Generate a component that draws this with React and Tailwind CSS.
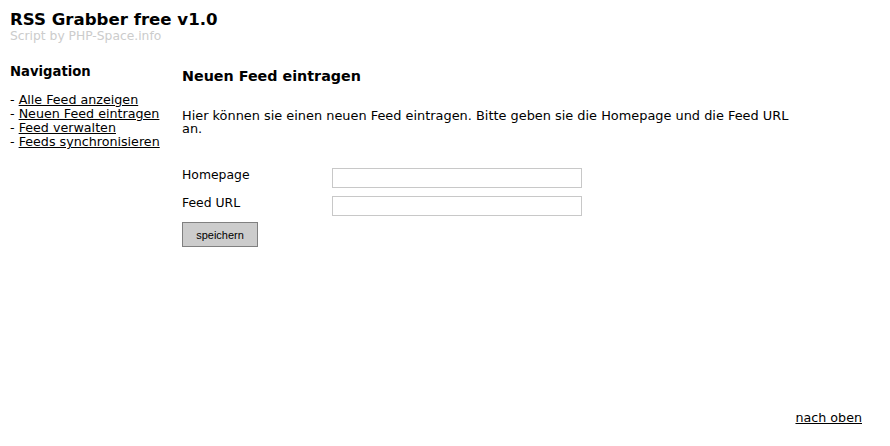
import React from 'react';

const navLinks = ['Alle Feed anzeigen', 'Neuen Feed eintragen', 'Feed verwalten', 'Feeds synchronisieren'];

const App = () => {
  return (
    <div className="min-h-screen flex flex-col bg-white text-black text-[12.7px] leading-[14px]" style={{ fontFamily: '"DejaVu Sans", Verdana, sans-serif' }}>
      {/* Header */}
      <div className="pl-[10px] pt-[10px]">
        <h1 className="text-[16.6px] leading-[19px] font-bold">RSS Grabber free v1.0</h1>
        <div className="text-[#cccccc] text-[12.3px] leading-[14px]">Script by PHP-Space.info</div>
      </div>

      <div className="flex mt-[20px]">
        {/* Navigation */}
        <div className="w-[182px] pl-[10px] shrink-0">
          <h2 className="text-[13.2px] leading-[17px] font-bold">Navigation</h2>
          <ul className="mt-[13px]">
            {navLinks.map((l) => (
              <li key={l}>
                - <a href="#" className="underline">{l}</a>
              </li>
            ))}
          </ul>
        </div>

        {/* Content */}
        <div className="w-[612px] pt-[5px]">
          <h2 className="text-[14.3px] leading-[17px] font-bold">Neuen Feed eintragen</h2>
          <p className="mt-[24px] text-[12.9px] leading-[13px]">
            Hier können sie einen neuen Feed eintragen. Bitte geben sie die Homepage und die Feed URL an.
          </p>
          <form className="mt-[33px] flex flex-col" onSubmit={(e) => e.preventDefault()}>
            <div className="flex items-start">
              <label className="w-[150px] text-[12.4px]">Homepage</label>
              <input type="text" className="w-[250px] h-[20px] border border-[#c8c8c8] outline-none" />
            </div>
            <div className="flex items-start mt-[8px]">
              <label className="w-[150px] text-[12.4px]">Feed URL</label>
              <input type="text" className="w-[250px] h-[20px] border border-[#c8c8c8] outline-none" />
            </div>
            <div className="mt-[6px]">
              <button type="submit" className="w-[76px] h-[25px] bg-[#cccccc] border border-[#808080] text-[11px]" style={{ fontFamily: '"Liberation Sans", Arial, sans-serif' }}>
                speichern
              </button>
            </div>
          </form>
        </div>
      </div>

      {/* Footer */}
      <div className="mt-auto flex justify-end pr-[28px] pb-[21px]">
        <a href="#" className="underline">nach oben</a>
      </div>
    </div>
  );
};

export default App;
